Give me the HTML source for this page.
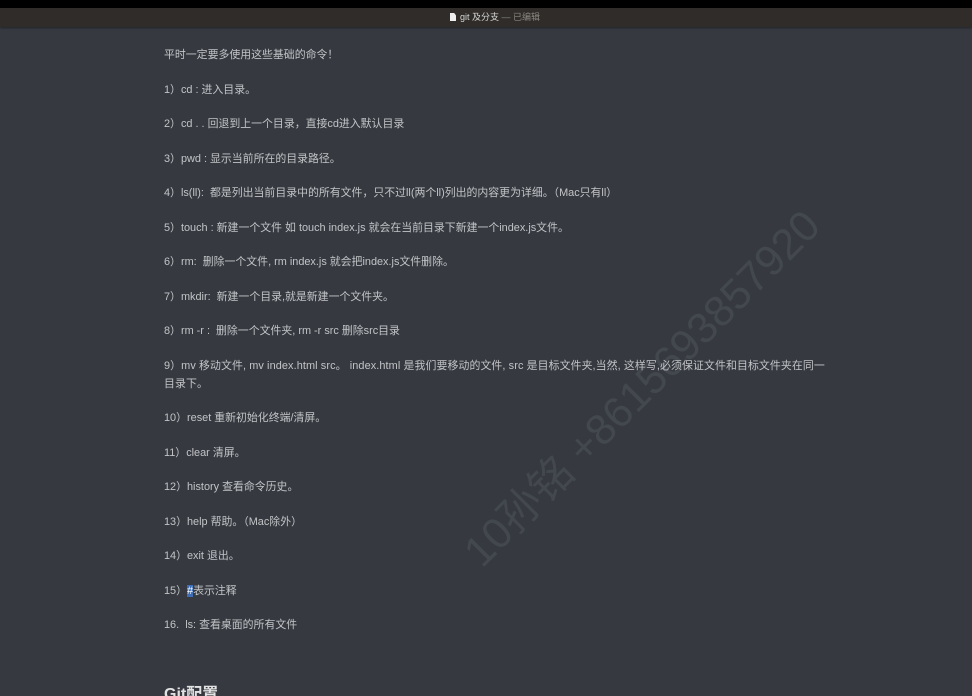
<!DOCTYPE html>
<html><head><meta charset="utf-8"><style>
html,body{margin:0;padding:0;width:972px;height:696px;overflow:hidden;background:#363a40;}
body{position:relative;font-family:"Liberation Sans","Noto Sans CJK SC",sans-serif;}
.top{position:absolute;left:0;top:0;width:972px;height:8px;background:#000;}
.bar{position:absolute;left:0;top:8px;width:972px;height:19px;background:#2f2c29;box-shadow:0 1px 2px rgba(0,0,0,.4);z-index:2;}
.bar .t{position:absolute;left:450px;top:3px;font-size:9px;color:#d8d8d8;line-height:12px;white-space:nowrap;}
.bar .t b{font-weight:normal;color:#8a8782;}
.doc{display:inline-block;width:6px;height:8px;background:#eee;vertical-align:-1px;margin-right:4px;clip-path:polygon(0 0,70% 0,100% 30%,100% 100%,0 100%);}
.c{position:absolute;left:164px;top:46px;width:680px;color:#c2c4c7;font-size:10.9px;line-height:18px;}
.c p{margin:0 0 16.5px 0;}
.sel{background:#3d6db5;color:#fff;}
h2{position:absolute;left:164px;top:680px;margin:0;font-size:16px;color:#e2e2e2;font-weight:bold;}
.wm{position:absolute;left:397px;top:355px;width:485px;text-align:center;font-size:43px;color:#43474e;transform:rotate(-45deg);white-space:nowrap;z-index:0;font-family:"Liberation Sans","Noto Sans CJK SC",sans-serif;}
</style></head><body>
<div class="wm">10孙铭 +8615693857920</div>
<div class="top"></div>
<div class="bar"><div class="t"><span class="doc"></span>git 及分支 <b>— 已编辑</b></div></div>
<div class="c">
<p>平时一定要多使用这些基础的命令！</p>
<p>1）cd : 进入目录。</p>
<p>2）cd . . 回退到上一个目录，直接cd进入默认目录</p>
<p>3）pwd : 显示当前所在的目录路径。</p>
<p>4）ls(ll):&nbsp; 都是列出当前目录中的所有文件，只不过ll(两个ll)列出的内容更为详细。（Mac只有ll）</p>
<p>5）touch : 新建一个文件 如 touch index.js 就会在当前目录下新建一个index.js文件。</p>
<p>6）rm:&nbsp; 删除一个文件, rm index.js 就会把index.js文件删除。</p>
<p>7）mkdir:&nbsp; 新建一个目录,就是新建一个文件夹。</p>
<p>8）rm -r :&nbsp; 删除一个文件夹, rm -r src 删除src目录</p>
<p style="letter-spacing:0.1px">9）mv 移动文件, mv index.html src。 index.html 是我们要移动的文件, src 是目标文件夹,当然, 这样写,必须保证文件和目标文件夹在同一<br>目录下。</p>
<p>10）reset 重新初始化终端/清屏。</p>
<p>11）clear 清屏。</p>
<p>12）history 查看命令历史。</p>
<p>13）help 帮助。（Mac除外）</p>
<p>14）exit 退出。</p>
<p>15）<span class="sel">#</span>表示注释</p>
<p>16.&nbsp; ls: 查看桌面的所有文件</p>
</div>
<h2>Git配置</h2>
</body></html>
